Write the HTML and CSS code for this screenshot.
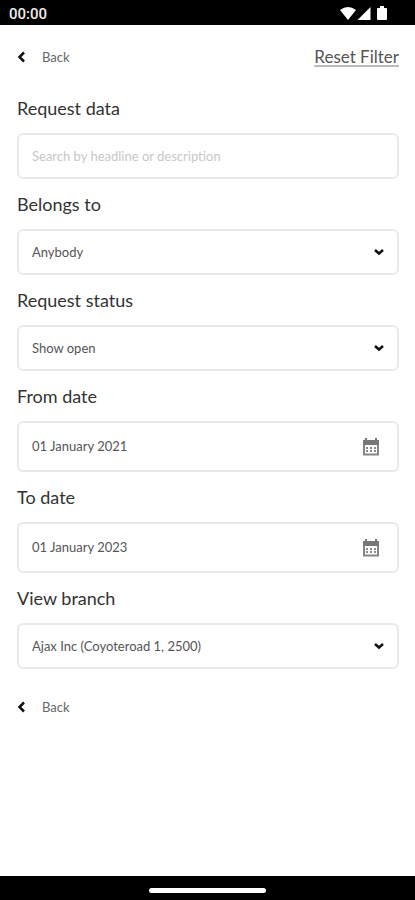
FILE: index.html
```html
<!DOCTYPE html>
<html lang="en">
<head>
<meta charset="utf-8">
<meta name="viewport" content="width=device-width, initial-scale=1">
<title>Request filter</title>
<link rel="stylesheet" href="styles.css">
</head>
<body>
<header class="status-bar">
  <span>00:00</span>
  <svg class="status-icons" viewBox="0 0 48 16" aria-hidden="true">
    <path d="M0 4Q8-2 16 4L8 14Z"/>
    <path d="M17.500 14L30.500 1V14Z"/>
    <path d="M40 0h4v2h2q1 0 1 1v10q0 1-1 1h-8q-1 0-1-1V3q0-1 1-1h2Z"/>
  </svg>
</header>
<main class="page">
  <nav class="top-nav">
    <a class="back" href="#"><svg class="chevron-left" viewBox="0 0 8 12" aria-hidden="true"><path d="M7 1.500L2.500 6l4.500 4.500"/></svg>Back</a>
    <a class="reset" href="#">Reset Filter</a>
  </nav>
  <form class="filters">
    <div class="field">
      <label for="query">Request data</label>
      <input class="control" id="query" type="text" placeholder="Search by headline or description">
    </div>
    <div class="field">
      <label for="owner">Belongs to</label>
      <div class="control-wrap">
        <select class="control" id="owner"><option>Anybody</option></select>
        <svg class="chevron-down" viewBox="0 0 10 8" aria-hidden="true"><path d="M1 2l4 3.500 4-3.500"/></svg>
      </div>
    </div>
    <div class="field">
      <label for="status">Request status</label>
      <div class="control-wrap">
        <select class="control" id="status"><option>Show open</option></select>
        <svg class="chevron-down" viewBox="0 0 10 8" aria-hidden="true"><path d="M1 2l4 3.500 4-3.500"/></svg>
      </div>
    </div>
    <div class="field">
      <label for="from">From date</label>
      <div class="control-wrap">
        <input class="control date" id="from" type="text" value="01 January 2021">
        <button class="calendar" type="button" aria-label="Choose from date">
          <svg viewBox="0 0 18 18" aria-hidden="true"><path class="frame" d="M2 3h14v13.500H2Z"/><path class="head" d="M1 2h2V0h2v2h8V0h2v2h2v5H1Z"/><path class="days" d="M4 10h10M4 13h10"/></svg>
        </button>
      </div>
    </div>
    <div class="field">
      <label for="to">To date</label>
      <div class="control-wrap">
        <input class="control date" id="to" type="text" value="01 January 2023">
        <button class="calendar" type="button" aria-label="Choose to date">
          <svg viewBox="0 0 18 18" aria-hidden="true"><path class="frame" d="M2 3h14v13.500H2Z"/><path class="head" d="M1 2h2V0h2v2h8V0h2v2h2v5H1Z"/><path class="days" d="M4 10h10M4 13h10"/></svg>
        </button>
      </div>
    </div>
    <div class="field">
      <label for="branch">View branch</label>
      <div class="control-wrap">
        <select class="control" id="branch"><option>Ajax Inc (Coyoteroad 1, 2500)</option></select>
        <svg class="chevron-down" viewBox="0 0 10 8" aria-hidden="true"><path d="M1 2l4 3.500 4-3.500"/></svg>
      </div>
    </div>
  </form>
  <nav class="bottom-nav">
    <a class="back" href="#"><svg class="chevron-left" viewBox="0 0 8 12" aria-hidden="true"><path d="M7 1.500L2.500 6l4.500 4.500"/></svg>Back</a>
  </nav>
</main>
<footer class="home-bar"><div class="home-handle"></div></footer>
</body>
</html>
```

FILE: styles.css
```css
* {
  box-sizing: border-box;
}

body {
  margin: 0;
  min-height: 100vh;
  display: flex;
  flex-direction: column;
  background: #fff;
  color: #333;
  font-family: Lato, "Liberation Sans", sans-serif;
}

.status-bar {
  display: flex;
  align-items: center;
  justify-content: space-between;
  padding: 2px 27px 0 9px;
  height: 25px;
  background: #000;
  color: #eee;
  font: 500 15px/20px Roboto, sans-serif;
}

.status-icons {
  width: 48px;
  height: 16px;
  fill: #fff;
}

.page {
  flex: 1;
  padding: 0 16px 0 17px;
}

.top-nav {
  display: flex;
  align-items: center;
  justify-content: space-between;
  padding: 20px 0 14px;
}

.back {
  display: inline-flex;
  align-items: center;
  gap: 17px;
  color: #666;
  font-size: 13px;
  line-height: 24px;
  text-decoration: none;
}

.reset {
  color: #555;
  font-size: 17px;
  line-height: 24px;
  text-decoration-color: #bbb;
  text-decoration-thickness: 2px;
  text-underline-offset: 2px;
}

.chevron-left {
  width: 8px;
  height: 12px;
  fill: none;
  stroke: #111;
  stroke-width: 2.5;
}

.field {
  display: flex;
  flex-direction: column;
  gap: 13px;
  padding-top: 13px;
}

.field label {
  color: #333;
  font-size: 18px;
  line-height: 24px;
}

.control-wrap {
  display: grid;
  align-items: center;
}

.control-wrap > * {
  grid-area: 1 / 1;
}

.control {
  width: 100%;
  height: 46px;
  margin: 0;
  padding: 0 14px 1px 13px;
  border: 2px solid #e9e9e9;
  border-radius: 6px;
  background: #fff;
  color: #555;
  font: 13px/20px Lato, "Liberation Sans", sans-serif;
  appearance: none;
}

.control::placeholder {
  color: #c8c8c8;
  opacity: 1;
}

.date {
  height: 51px;
}

.chevron-down {
  justify-self: end;
  width: 10px;
  height: 8px;
  margin-right: 15px;
  fill: none;
  stroke: #111;
  stroke-width: 2.5;
  pointer-events: none;
}

.calendar {
  justify-self: end;
  display: flex;
  margin: 0 19px 0 0;
  padding: 0;
  border: 0;
  background: none;
}

.calendar svg {
  width: 18px;
  height: 18px;
}

.frame {
  fill: #fff;
  stroke: #858585;
  stroke-width: 2;
}

.head {
  fill: #777;
}

.days {
  fill: none;
  stroke: #888;
  stroke-width: 2;
  stroke-dasharray: 2;
}

.bottom-nav {
  display: flex;
  padding: 26px 0;
}

.home-bar {
  display: flex;
  align-items: center;
  justify-content: center;
  height: 24px;
  padding-top: 4px;
  background: #000;
}

.home-handle {
  width: 28%;
  height: 5px;
  border-radius: 3px;
  background: #fff;
}
```
